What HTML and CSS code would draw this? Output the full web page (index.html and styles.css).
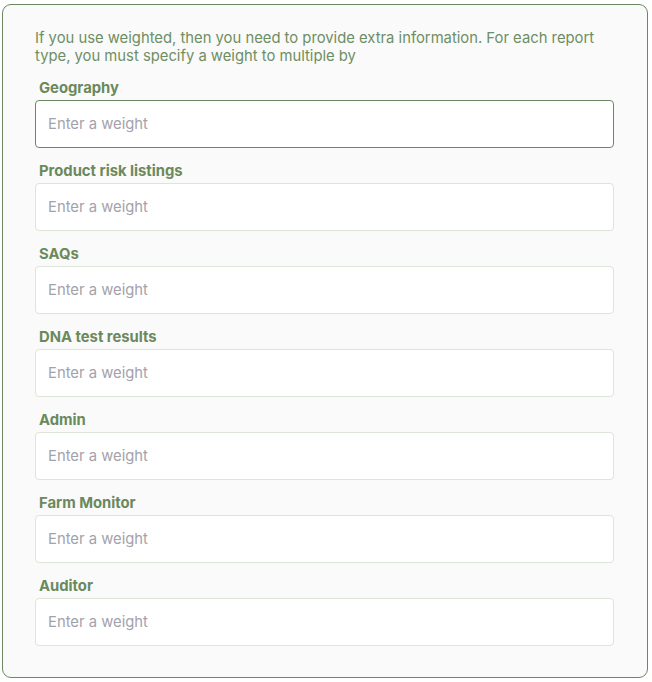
FILE: index.html
```html
<!DOCTYPE html>
<html lang="en">
<head>
<meta charset="utf-8">
<title>Weights</title>
<link rel="stylesheet" href="styles.css">
</head>
<body>
<form class="card">
  <p class="intro">If you use weighted, then you need to provide extra information. For each report type, you must specify a weight to multiple by</p>
  <div class="field">
    <label class="label" for="w1">Geography</label>
    <input class="input focused" id="w1" type="text" placeholder="Enter a weight">
  </div>
  <div class="field">
    <label class="label" for="w2">Product risk listings</label>
    <input class="input" id="w2" type="text" placeholder="Enter a weight">
  </div>
  <div class="field">
    <label class="label" for="w3">SAQs</label>
    <input class="input" id="w3" type="text" placeholder="Enter a weight">
  </div>
  <div class="field">
    <label class="label" for="w4">DNA test results</label>
    <input class="input" id="w4" type="text" placeholder="Enter a weight">
  </div>
  <div class="field">
    <label class="label" for="w5">Admin</label>
    <input class="input" id="w5" type="text" placeholder="Enter a weight">
  </div>
  <div class="field">
    <label class="label" for="w6">Farm Monitor</label>
    <input class="input" id="w6" type="text" placeholder="Enter a weight">
  </div>
  <div class="field">
    <label class="label" for="w7">Auditor</label>
    <input class="input" id="w7" type="text" placeholder="Enter a weight">
  </div>
</form>
</body>
</html>
```
FILE: styles.css
```css
* { box-sizing: border-box; }
html, body { margin: 0; padding: 0; background: #ffffff; }
body {
  padding: 4px 4px 4px 2px;
  font-family: Inter, "Noto Sans", sans-serif;
}
.card {
  height: 674px;
  border: 1px solid #6c8862;
  border-radius: 9px;
  background: #fafafa;
  padding: 24px 33px 32px 32px;
  display: flex;
  flex-direction: column;
  gap: 13px;
}
.intro {
  margin: 0;
  font-size: 14.8px;
  line-height: 18px;
  color: #6e8e63;
}
.field {
  display: flex;
  flex-direction: column;
  gap: 2px;
}
.label {
  padding-left: 4px;
  font-size: 14.8px;
  line-height: 20px;
  font-weight: 700;
  color: #6a895d;
}
.input {
  height: 48px;
  width: 100%;
  border: 1px solid #dce5d6;
  border-radius: 4px;
  background: #ffffff;
  padding: 0 12px;
  font-family: inherit;
  font-size: 14.8px;
  color: #333;
  outline: none;
}
.input.focused { border-color: #6c8862; }
.input::placeholder { color: #a3a2ac; }
```
